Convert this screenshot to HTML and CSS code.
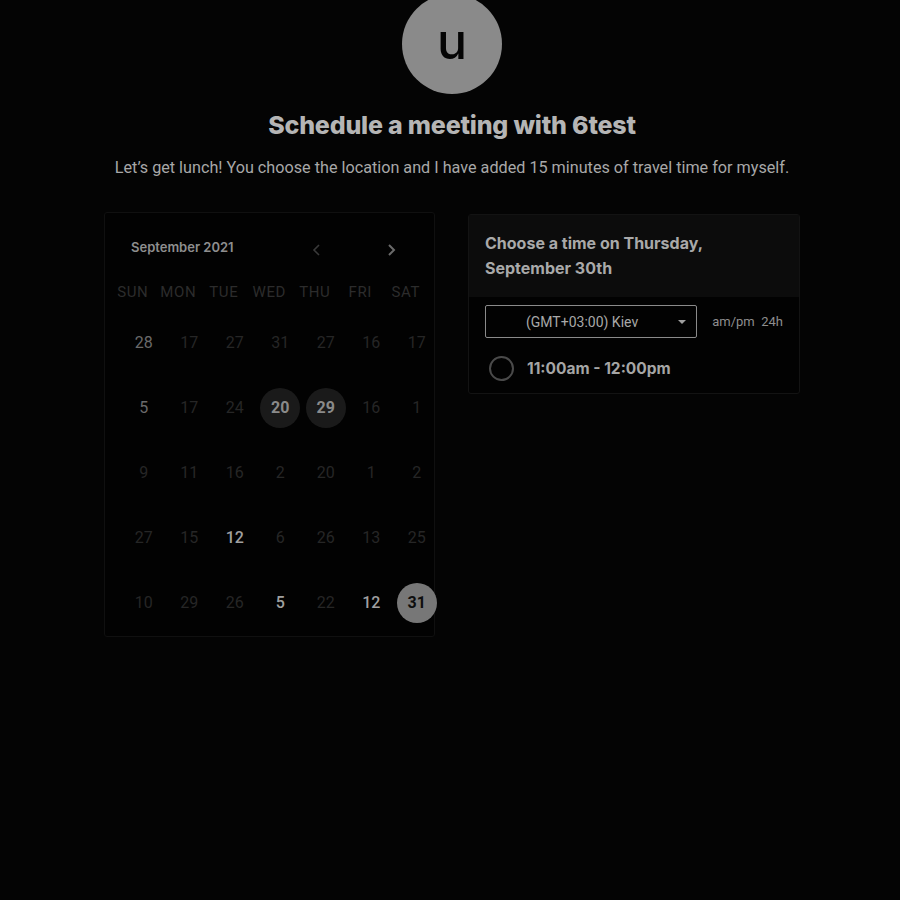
FILE: index.html
```html
<!DOCTYPE html>
<html>
<head>
<meta charset="utf-8">
<link rel="stylesheet" href="styles.css">
</head>
<body>
<div class="page">
  <div class="avatar">u</div>
  <h1 class="title">Schedule a meeting with 6test</h1>
  <p class="subtitle">Let’s get lunch! You choose the location and I have added 15 minutes of travel time for myself.</p>
  <div class="main">
    <div class="calendar">
      <div class="cal-head">
        <span class="month">September 2021</span>
        <div class="arrows">
          <svg class="arrow prev" width="12" height="14" viewBox="0 0 12 14"><path d="M8 2 L3 7 L8 12" fill="none" stroke="#3a3a3a" stroke-width="1.6"/></svg>
          <svg class="arrow next" width="12" height="14" viewBox="0 0 12 14"><path d="M3 2 L8 7 L3 12" fill="none" stroke="#6a6a6a" stroke-width="2"/></svg>
        </div>
      </div>
      <div class="grid">
        <span class="wd">SUN</span><span class="wd">MON</span><span class="wd">TUE</span><span class="wd">WED</span><span class="wd">THU</span><span class="wd">FRI</span><span class="wd">SAT</span>
        <span class="d mid">28</span><span class="d">17</span><span class="d">27</span><span class="d">31</span><span class="d">27</span><span class="d">16</span><span class="d">17</span>
        <span class="d mid">5</span><span class="d">17</span><span class="d">24</span><span class="d sel">20</span><span class="d sel">29</span><span class="d">16</span><span class="d">1</span>
        <span class="d">9</span><span class="d">11</span><span class="d">16</span><span class="d">2</span><span class="d">20</span><span class="d">1</span><span class="d">2</span>
        <span class="d">27</span><span class="d">15</span><span class="d hi">12</span><span class="d">6</span><span class="d">26</span><span class="d">13</span><span class="d">25</span>
        <span class="d">10</span><span class="d">29</span><span class="d">26</span><span class="d hi">5</span><span class="d">22</span><span class="d hi">12</span><span class="d today">31</span>
      </div>
    </div>
    <div class="times">
      <div class="times-head">Choose a time on Thursday, September 30th</div>
      <div class="times-body">
        <div class="tz-row">
          <div class="select">(GMT+03:00) Kiev<span class="caret"></span></div>
          <div class="fmt">am/pm&nbsp;&nbsp;24h</div>
        </div>
        <div class="slot">
          <span class="radio"></span>
          <span class="slot-text">11:00am - 12:00pm</span>
        </div>
      </div>
    </div>
  </div>
</div>
</body>
</html>
```
FILE: styles.css
```css
html, body {
  margin: 0;
  padding: 0;
  background: #040404;
}
.page {
  width: 900px;
  height: 900px;
  overflow: hidden;
  display: flex;
  flex-direction: column;
  align-items: center;
  font-family: Roboto, "Liberation Sans", sans-serif;
}
.avatar {
  width: 100px;
  height: 100px;
  border-radius: 50%;
  background: #8a8a8a;
  margin-top: -6px;
  margin-left: 4px;
  display: flex;
  align-items: center;
  justify-content: center;
  font-family: Inter, "Liberation Sans", sans-serif;
  font-weight: 500;
  font-size: 50px;
  color: #050505;
  line-height: 1;
  padding-bottom: 6px;
  box-sizing: border-box;
}
.title {
  margin: 16px 0 0 4px;
  font-family: Inter, "Liberation Sans", sans-serif;
  font-weight: 800;
  font-size: 25px;
  line-height: 30px;
  color: #b5b5b5;
  letter-spacing: -0.2px;
}
.subtitle {
  margin: 17px 0 0 4px;
  font-size: 16.2px;
  line-height: 22px;
  color: #a8a8a8;
}
.main {
  margin-top: 33px;
  margin-left: 4px;
  display: flex;
  gap: 33px;
  align-items: flex-start;
}
.calendar {
  width: 331px;
  height: 425px;
  box-sizing: border-box;
  border: 1px solid #101010;
  border-radius: 3px;
  background: #020202;
  padding: 22px 0 0 0;
}
.cal-head {
  display: flex;
  align-items: center;
  padding-left: 26px;
  height: 24px;
}
.month {
  font-family: Inter, "Liberation Sans", sans-serif;
  font-weight: 600;
  font-size: 13px;
  color: #8e8e8e;
}
.arrows {
  display: flex;
  gap: 63px;
  margin-left: 77px;
  margin-top: 6px;
}
.grid {
  margin-top: 22px;
  padding-left: 16px;
  display: grid;
  grid-template-columns: repeat(7, 45.5px);
  grid-template-rows: 28px repeat(5, 65px);
}
.wd {
  text-align: center;
  margin-right: 22px;
  font-size: 15px;
  letter-spacing: 0.6px;
  color: #2c2c2c;
  line-height: 22px;
  white-space: nowrap;
  display: flex;
  justify-content: center;
}
.d {
  justify-self: center;
  align-self: center;
  width: 40px;
  height: 40px;
  border-radius: 50%;
  display: flex;
  align-items: center;
  justify-content: center;
  font-size: 16px;
  color: #262626;
  margin-top: 2px;
}
.d.mid { color: #6a6a6a; }
.d.hi { color: #a0a0a0; font-weight: 500; }
.d.sel {
  background: #1a1a1a;
  color: #8a8a8a;
  font-weight: 700;
}
.d.today {
  background: #777777;
  color: #0e0e0e;
  font-weight: 700;
}
.times {
  width: 332px;
  box-sizing: border-box;
  border: 1px solid #131313;
  border-radius: 3px;
  background: #020202;
  margin-top: 2px;
}
.times-head {
  background: #0c0c0c;
  padding: 16px 80px 16px 16px;
  font-family: Inter, "Liberation Sans", sans-serif;
  font-weight: 700;
  font-size: 16px;
  line-height: 25px;
  color: #a9a9a9;
}
.times-body {
  padding: 8px 16px 12px 16px;
}
.tz-row {
  display: flex;
  align-items: center;
}
.select {
  width: 213px;
  height: 33px;
  box-sizing: border-box;
  border: 1px solid #8a8a8a;
  border-radius: 2px;
  position: relative;
  display: flex;
  align-items: center;
  padding-left: 40px;
  font-size: 14px;
  color: #a8a8a8;
}
.caret {
  position: absolute;
  right: 10px;
  top: 14px;
  width: 0;
  height: 0;
  border-left: 4px solid transparent;
  border-right: 4px solid transparent;
  border-top: 4px solid #a0a0a0;
}
.fmt {
  margin-left: 15px;
  font-size: 13px;
  color: #8e8e8e;
}
.slot {
  display: flex;
  align-items: center;
  margin-top: 18px;
  padding-left: 4px;
}
.radio {
  width: 21px;
  height: 21px;
  border: 2px solid #4a4a4a;
  border-radius: 50%;
}
.slot-text {
  margin-left: 13px;
  font-family: Inter, "Liberation Sans", sans-serif;
  font-weight: 700;
  font-size: 15.5px;
  color: #a5a5a5;
}
```
